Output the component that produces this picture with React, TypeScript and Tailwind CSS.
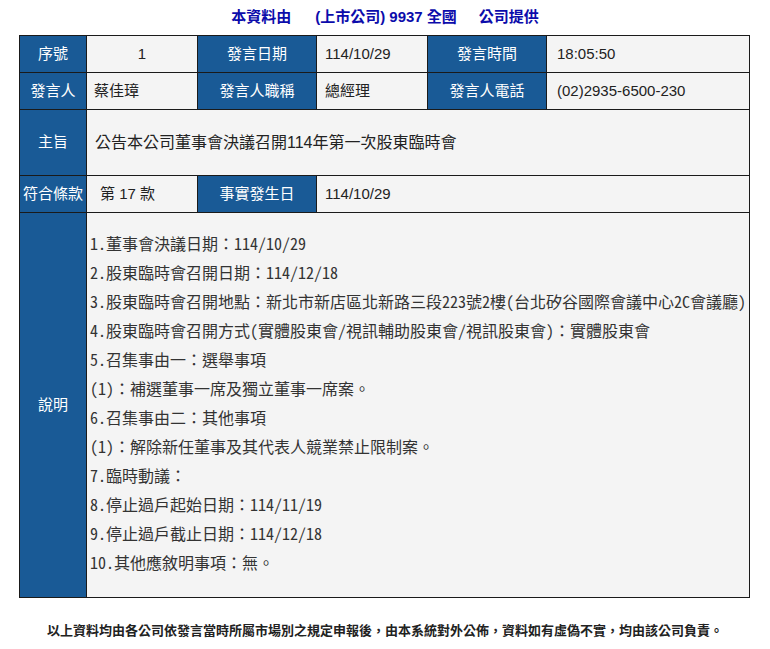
import React from 'react';

const sans = { fontFamily: '"Liberation Sans", "Noto Sans CJK TC", sans-serif' };
const mono = { fontFamily: '"Noto Sans Mono CJK TC", "Noto Sans CJK TC", monospace' };

const Label: React.FC<{ children: React.ReactNode; className?: string }> = ({ children, className = '' }) => (
    <div className={`bg-[#195a96] text-white text-[15px] flex items-center justify-center ${className}`}>
        {children}
    </div>
);

const Value: React.FC<{ children: React.ReactNode; className?: string }> = ({ children, className = '' }) => (
    <div className={`bg-[#f4f4f4] text-[#222] text-[15px] flex items-center ${className}`}>
        {children}
    </div>
);

const notes = [
    '1.董事會決議日期：114/10/29',
    '2.股東臨時會召開日期：114/12/18',
    '3.股東臨時會召開地點：新北市新店區北新路三段223號2樓(台北矽谷國際會議中心2C會議廳)',
    '4.股東臨時會召開方式(實體股東會/視訊輔助股東會/視訊股東會)：實體股東會',
    '5.召集事由一：選舉事項',
    '(1)：補選董事一席及獨立董事一席案。',
    '6.召集事由二：其他事項',
    '(1)：解除新任董事及其代表人競業禁止限制案。',
    '7.臨時動議：',
    '8.停止過戶起始日期：114/11/19',
    '9.停止過戶截止日期：114/12/18',
    '10.其他應敘明事項：無。',
];

export default function App() {
    return (
        <div className="w-[770px] h-[649px] bg-white" style={sans}>
            {/* Title */}
            <div className="h-[35px] flex items-center justify-center text-[15px] font-bold text-[#0c0cab]">
                <span>本資料由</span>
                <span className="ml-[24px]">(上市公司)</span>
                <span className="ml-[4px]">9937</span>
                <span className="ml-[4px]">全國</span>
                <span className="ml-[22px]">公司提供</span>
            </div>

            {/* Main table */}
            <div className="ml-[19px] w-[731px] p-px gap-px bg-[#1a1a1a] grid grid-cols-[66px_110px_118px_110px_118px_202px] grid-rows-[36px_36px_65px_36px_384px]">
                <Label>序號</Label>
                <Value className="justify-center">1</Value>
                <Label>發言日期</Label>
                <Value className="pl-[8px]">114/10/29</Value>
                <Label>發言時間</Label>
                <Value className="pl-[10px]">18:05:50</Value>

                <Label>發言人</Label>
                <Value className="pl-[7px]">蔡佳璋</Value>
                <Label>發言人職稱</Label>
                <Value className="pl-[8px]">總經理</Value>
                <Label>發言人電話</Label>
                <Value className="pl-[10px]">(02)2935-6500-230</Value>

                <Label>主旨</Label>
                <Value className="col-span-5 pl-[8px] text-[16px]">公告本公司董事會決議召開114年第一次股東臨時會</Value>

                <Label>符合條款</Label>
                <Value className="pl-[13px]">第 17 款</Value>
                <Label>事實發生日</Label>
                <Value className="col-span-3 pl-[8px]">114/10/29</Value>

                <Label>說明</Label>
                <div className="col-span-5 bg-[#f4f4f4] text-[#333] text-[16px] leading-[29px] pt-[16px] pl-[3px] whitespace-pre" style={mono}>
                    {notes.map((line) => (
                        <div key={line}>{line}</div>
                    ))}
                </div>
            </div>

            {/* Footer */}
            <div className="mt-[23px] text-center text-[13px] font-bold text-[#222]">
                以上資料均由各公司依發言當時所屬市場別之規定申報後，由本系統對外公佈，資料如有虛偽不實，均由該公司負責。
            </div>
        </div>
    );
}
